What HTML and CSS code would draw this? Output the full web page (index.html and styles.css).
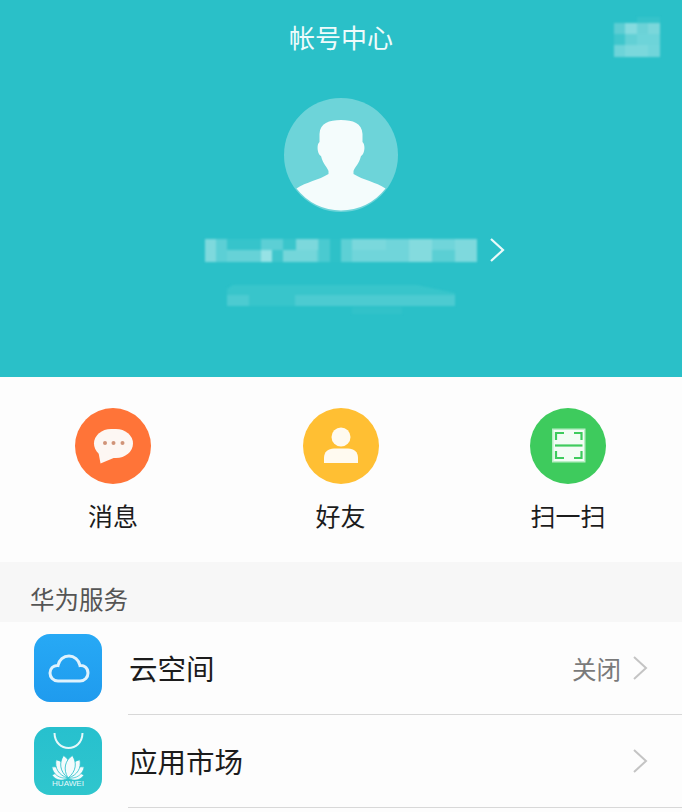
FILE: index.html
```html
<!DOCTYPE html>
<html lang="zh-CN">
<head>
    <meta charset="UTF-8">
    <meta name="viewport" content="width=device-width, initial-scale=1.0">
    <title>帐号中心</title>
    <link rel="stylesheet" href="styles.css">
</head>
<body>
    <header class="account">
        <div class="topbar">
            <h1 class="title">帐号中心</h1>
            <svg class="mosaic-btn" width="46" height="40" viewBox="0 0 46 40">
                <rect x="23" y="0" width="23" height="6" fill="#35c3ca"/>
                <rect x="0" y="6" width="11" height="11" fill="#5ccdd3"/>
                <rect x="11" y="6" width="12" height="11" fill="#85dbdf"/>
                <rect x="23" y="6" width="11" height="11" fill="#6bd2d7"/>
                <rect x="34" y="6" width="12" height="11" fill="#7ad7db"/>
                <rect x="0" y="17" width="11" height="11" fill="#3fc6cc"/>
                <rect x="11" y="17" width="12" height="11" fill="#62d0d5"/>
                <rect x="23" y="17" width="23" height="11" fill="#6dd4d9"/>
                <rect x="0" y="28" width="11" height="12" fill="#6dd4d9"/>
                <rect x="11" y="28" width="23" height="12" fill="#7ad8dc"/>
                <rect x="34" y="28" width="12" height="12" fill="#70d5da"/>
            </svg>
        </div>

        <svg class="avatar" width="114" height="114" viewBox="0 0 114 114">
            <circle cx="57" cy="57" r="57" fill="#6dd4d9"/>
            <path fill="#f4fcfc" d="M57 22C45 22 36 25 35.500 36L35.500 44C32.500 46 33 56 37 58C39 66 43 69 44.500 73L44.500 76C35 82 22 84 12.500 90.500A56 56 0 0 0 101.500 90.500C92 84 79 82 69.500 76L69.500 73C71 69 75 66 77 58C81 56 81.500 46 78.500 44L78.500 36C78 25 69 22 57 22Z"/>
        </svg>

        <div class="name-row">
            <svg class="mosaic-name" width="272" height="23" viewBox="0 0 272 23">
                <rect x="0" y="0" width="114" height="23" fill="#5ccfd5"/>
                <rect x="136" y="0" width="136" height="23" fill="#70d5da"/>
                <rect x="0" y="0" width="11" height="23" fill="#7ed9dd"/>
                <rect x="22" y="0" width="34" height="11" fill="#36c4cb"/>
                <rect x="22" y="11" width="34" height="12" fill="#66d2d7"/>
                <rect x="56" y="11" width="11" height="12" fill="#96e2e5"/>
                <rect x="67" y="11" width="11" height="12" fill="#3fc6cc"/>
                <rect x="78" y="0" width="22" height="11" fill="#3ac5cb"/>
                <rect x="78" y="11" width="34" height="12" fill="#74d6da"/>
                <rect x="91" y="0" width="22" height="11" fill="#7cd8dc"/>
                <rect x="114" y="0" width="11" height="23" fill="#4acad0"/>
                <rect x="125" y="0" width="11" height="23" fill="#2ec1c8"/>
                <rect x="136" y="0" width="11" height="23" fill="#5dd0d5"/>
                <rect x="147" y="0" width="34" height="11" fill="#7ad8dc"/>
                <rect x="204" y="0" width="23" height="23" fill="#84dbde"/>
                <rect x="227" y="11" width="23" height="12" fill="#5bcfd4"/>
                <rect x="250" y="0" width="22" height="23" fill="#7ed9dd"/>
            </svg>
            <svg class="chevron-white" width="16" height="24" viewBox="0 0 16 24">
                <path d="M2 1L14 12L2 23" fill="none" stroke="#eafafa" stroke-width="2.200"/>
            </svg>
        </div>

        <svg class="mosaic-sub" width="228" height="36" viewBox="0 0 228 36">
            <path d="M6 2H190L228 10V23H0V6Z" fill="#38c5cb"/>
            <rect x="68" y="12" width="160" height="11" fill="#4ccbd1"/>
            <rect x="0" y="12" width="22" height="11" fill="#4ccbd1"/>
            <rect x="125" y="24" width="50" height="7" fill="#31c2c9"/>
        </svg>
    </header>

    <section class="actions">
        <div class="action">
            <svg width="76" height="76" viewBox="0 0 76 76">
                <circle cx="38" cy="38" r="38" fill="#ff7438"/>
                <rect x="19" y="21" width="39" height="29" rx="17" ry="14.500" fill="#fdf7f3"/>
                <path d="M23 42L25.500 55.500L41 49Z" fill="#fdf7f3"/>
                <circle cx="30" cy="35" r="2" fill="#d09378"/>
                <circle cx="38.500" cy="35" r="2" fill="#d09378"/>
                <circle cx="47.500" cy="35" r="2" fill="#d09378"/>
            </svg>
            <span class="action-label">消息</span>
        </div>
        <div class="action">
            <svg width="76" height="76" viewBox="0 0 76 76">
                <circle cx="38" cy="38" r="38" fill="#ffbf33"/>
                <circle cx="38" cy="29" r="9.500" fill="#fffaf0"/>
                <path d="M21 55V50C21 44 25 40.500 31 40.500H45C51 40.500 55 44 55 50V55Z" fill="#fffaf0"/>
            </svg>
            <span class="action-label">好友</span>
        </div>
        <div class="action">
            <svg width="76" height="76" viewBox="0 0 76 76">
                <circle cx="38" cy="38" r="38" fill="#3ecb5d"/>
                <rect x="22" y="20.500" width="33.500" height="34" fill="#b9efc6"/>
                <rect x="23.500" y="22" width="30.500" height="31" fill="#f3fcf5"/>
                <path d="M26 32V25H34M44 25H51.500V32M26 43V50H34M44 50H51.500V43" fill="none" stroke="#3ecb5d" stroke-width="2.200"/>
                <path d="M25 37.500H52.500" stroke="#3ecb5d" stroke-width="2.200"/>
            </svg>
            <span class="action-label">扫一扫</span>
        </div>
    </section>

    <h2 class="section-title">华为服务</h2>

    <ul class="list">
        <li class="item">
            <svg class="app-icon" width="68" height="68" viewBox="0 0 68 68">
                <defs>
                    <linearGradient id="cloudBg" x1="0" y1="0" x2="0" y2="1">
                        <stop offset="0" stop-color="#27a9f5"/>
                        <stop offset="1" stop-color="#1f9bee"/>
                    </linearGradient>
                </defs>
                <rect width="68" height="68" rx="16" fill="url(#cloudBg)"/>
                <path d="M24 47H46C51 47 54 43 54 39C54 34 50 31 46 31.500C45 26 40 22 35 22C29.500 22 25 26 24 31.500C19 31 16 35 16 39C16 43 19 47 24 47Z" fill="none" stroke="#dff2fd" stroke-width="3"/>
            </svg>
            <div class="item-body">
                <span class="item-name">云空间</span>
                <span class="item-value">关闭</span>
                <svg class="chevron" width="16" height="26" viewBox="0 0 16 26">
                    <path d="M2 2L14 13L2 24" fill="none" stroke="#c4c4c4" stroke-width="2"/>
                </svg>
            </div>
        </li>
        <li class="item">
            <svg class="app-icon" width="68" height="68" viewBox="0 0 68 68">
                <defs>
                    <linearGradient id="storeBg" x1="0" y1="0" x2="0" y2="1">
                        <stop offset="0" stop-color="#27c0ce"/>
                        <stop offset="1" stop-color="#2fc6cd"/>
                    </linearGradient>
                </defs>
                <rect width="68" height="68" rx="16" fill="url(#storeBg)"/>
                <path d="M20.500 6C21 26 48 26 48.500 6" fill="none" stroke="#e6f8fa" stroke-width="2"/>
                <g fill="#f2fbfc" stroke="#2ac3cd" stroke-width="0.800" transform="translate(34 51)">
                    <path transform="rotate(-80) scale(0.7)" d="M0 0C-7 -8 -6 -17 0 -23C6 -17 7 -8 0 0Z"/>
                    <path transform="rotate(80) scale(0.7)" d="M0 0C-7 -8 -6 -17 0 -23C6 -17 7 -8 0 0Z"/>
                    <path transform="rotate(-56) scale(0.85)" d="M0 0C-7 -8 -6 -17 0 -23C6 -17 7 -8 0 0Z"/>
                    <path transform="rotate(56) scale(0.85)" d="M0 0C-7 -8 -6 -17 0 -23C6 -17 7 -8 0 0Z"/>
                    <path transform="rotate(-33) scale(0.95)" d="M0 0C-7 -8 -6 -17 0 -23C6 -17 7 -8 0 0Z"/>
                    <path transform="rotate(33) scale(0.95)" d="M0 0C-7 -8 -6 -17 0 -23C6 -17 7 -8 0 0Z"/>
                    <path transform="rotate(-11)" d="M0 0C-7 -8 -6 -17 0 -23C6 -17 7 -8 0 0Z"/>
                    <path transform="rotate(11)" d="M0 0C-7 -8 -6 -17 0 -23C6 -17 7 -8 0 0Z"/>
                </g>
                <text class="huawei" x="34" y="59" text-anchor="middle" textLength="32" lengthAdjust="spacingAndGlyphs">HUAWEI</text>
            </svg>
            <div class="item-body">
                <span class="item-name">应用市场</span>
                <svg class="chevron" width="16" height="26" viewBox="0 0 16 26">
                    <path d="M2 2L14 13L2 24" fill="none" stroke="#c4c4c4" stroke-width="2"/>
                </svg>
            </div>
        </li>
    </ul>
</body>
</html>
```

FILE: styles.css
```css
html, body {
    height: 100%;
}
body {
    margin: 0;
    overflow: hidden;
    background-color: #fdfdfd;
    color: #1c1c1c;
    font-family: "Noto Sans CJK SC", "Noto Sans", sans-serif;
}
svg {
    display: block;
}
.account {
    height: 377px;
    background-color: #2ac0c8;
    display: flex;
    flex-direction: column;
    align-items: center;
}
.topbar {
    width: 100%;
    height: 98px;
    display: grid;
    grid-template-columns: 1fr auto 1fr;
    align-items: start;
}
.title {
    grid-column: 2;
    margin: 17px 0 0;
    font-size: 26px;
    line-height: 40px;
    font-weight: 400;
    color: #eefbfb;
}
.mosaic-btn {
    grid-column: 3;
    justify-self: end;
    margin: 17px 22px 0 0;
    filter: blur(0.8px);
}
.name-row {
    margin-top: 26px;
    margin-left: 28px;
    display: flex;
    align-items: center;
    gap: 12px;
}
.mosaic-name {
    filter: blur(0.8px);
}
.mosaic-sub {
    margin-top: 21px;
    filter: blur(1px);
}
.actions {
    height: 185px;
    padding: 31px 76px 0 75px;
    box-sizing: border-box;
    display: grid;
    grid-template-columns: repeat(3, 76px);
    justify-content: space-between;
}
.action {
    display: flex;
    flex-direction: column;
    align-items: center;
    white-space: nowrap;
}
.action-label {
    margin-top: 12px;
    font-size: 25px;
    line-height: 38px;
}
.section-title {
    margin: 0;
    height: 60px;
    padding-left: 30px;
    background-color: #f7f7f7;
    color: #555;
    font-size: 24.500px;
    line-height: 73px;
    font-weight: 400;
    overflow: hidden;
}
.list {
    margin: 0;
    padding: 0;
    list-style: none;
}
.item {
    height: 93px;
    display: flex;
    align-items: stretch;
}
.app-icon {
    flex: none;
    margin: 12px 26px 0 34px;
}
.item-body {
    flex: 1;
    display: flex;
    align-items: center;
    box-sizing: border-box;
    border-bottom: 1px solid #d8d8d8;
    padding-right: 34px;
}
.item-name {
    flex: 1;
    padding-left: 1px;
    font-size: 28.500px;
    line-height: 40px;
}
.item-value {
    margin-right: 11px;
    font-size: 24.500px;
    color: #7a7a7a;
}
.huawei {
    font-family: "Liberation Sans", sans-serif;
    font-size: 8px;
    fill: #e6f8fa;
}
```
